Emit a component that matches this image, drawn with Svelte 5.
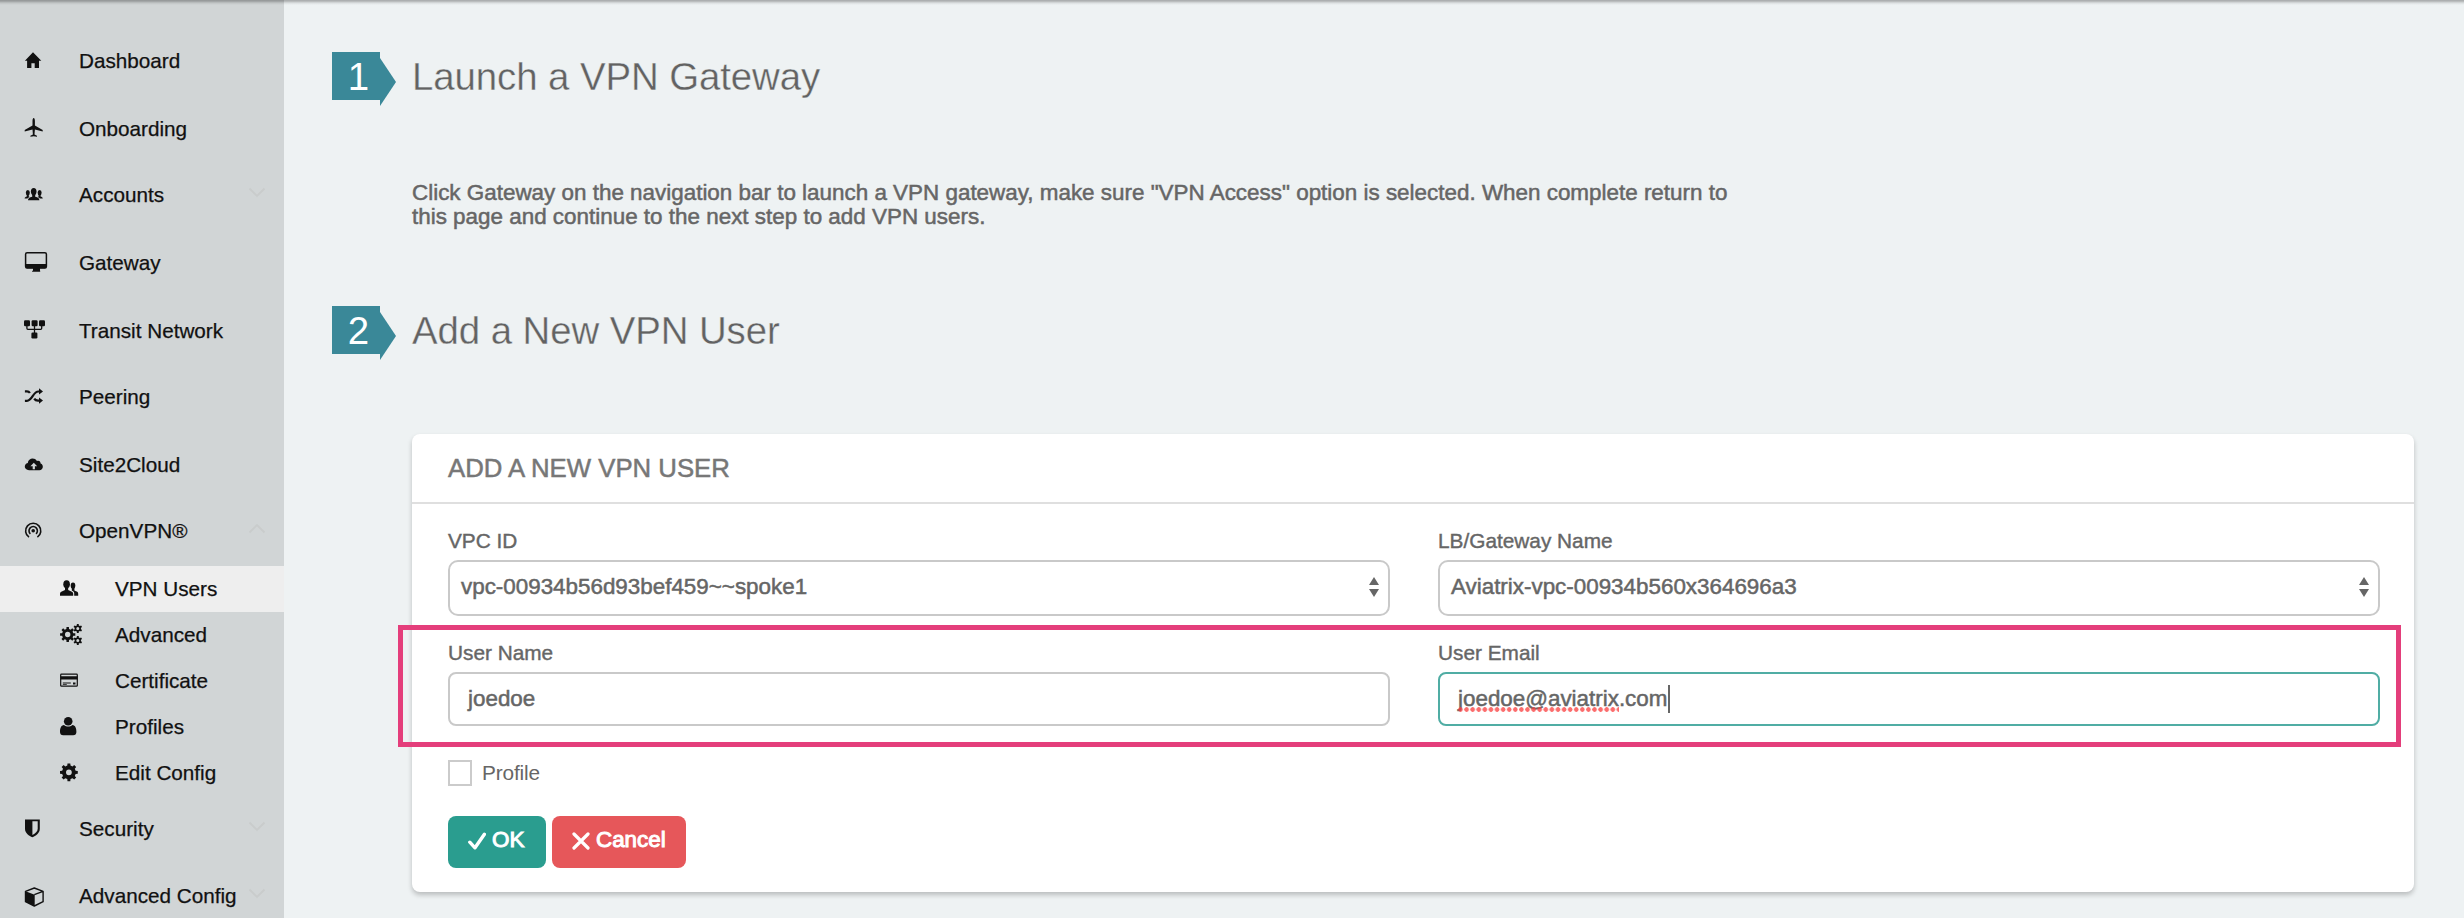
<script>
  function gear(cx, cy, outer, root, teeth, hole) {
    const step = (Math.PI * 2) / teeth;
    const at = (r, a) => `${(cx + r * Math.sin(a)).toFixed(2)} ${(cy - r * Math.cos(a)).toFixed(2)}`;
    let d = '';
    for (let i = 0; i < teeth; i++) {
      const a = i * step;
      d += `${i ? 'L' : 'M'}${at(root, a - step * 0.3)}L${at(outer, a - step * 0.2)}L${at(outer, a + step * 0.2)}L${at(root, a + step * 0.3)}`;
    }
    return `${d}ZM${cx - hole} ${cy}a${hole} ${hole} 0 1 0 ${hole * 2} 0a${hole} ${hole} 0 1 0 ${-hole * 2} 0Z`;
  }

  const items = [
    { label: 'Dashboard', icon: 'home', h: 68 },
    { label: 'Onboarding', icon: 'plane', h: 68 },
    { label: 'Accounts', icon: 'group', h: 64, chevron: 'down' },
    { label: 'Gateway', icon: 'desktop', h: 72 },
    { label: 'Transit Network', icon: 'transit', h: 64 },
    { label: 'Peering', icon: 'random', h: 68 },
    { label: 'Site2Cloud', icon: 'cloud', h: 68 },
    { label: 'OpenVPN®', icon: 'podcast', h: 64, chevron: 'up', open: true },
    { label: 'VPN Users', icon: 'users', h: 46, sub: true, active: true },
    { label: 'Advanced', icon: 'gears', h: 46, sub: true },
    { label: 'Certificate', icon: 'card', h: 46, sub: true },
    { label: 'Profiles', icon: 'user', h: 46, sub: true },
    { label: 'Edit Config', icon: 'gear', h: 46, sub: true },
    { label: 'Security', icon: 'shield', h: 66, chevron: 'down' },
    { label: 'Advanced Config', icon: 'cube', h: 68, chevron: 'down' }
  ];
</script>

<div class="page">
  <nav class="sidebar">
    {#each items as item}
      <a class="item" class:sub={item.sub} class:active={item.active} class:open={item.open} style:height="{item.h}px">
        <svg class="icon" width="26" height="24" viewBox="0 0 26 24">
          {#if item.icon === 'home'}
            <path d="M9 3.3L.9 11.7h2.2V19h4.3v-4.800h3.300V19H15v-7.300h2.300z" />
          {:else if item.icon === 'plane'}
            <path d="M9.7 1c.8 0 1.2 1.4 1.2 3v4.6l7.8 4.3v1.6l-7.8-2.1-.4 5 2.5 1.3v1.1l-3.3-.5-3.3.5v-1.1l2.5-1.3-.4-5-7.8 2.1v-1.6l7.8-4.3V4c0-1.6.4-3 1.2-3z" />
          {:else if item.icon === 'group'}
            <ellipse cx="9.7" cy="8.6" rx="2.8" ry="3.6" />
            <path d="M4 17.2c0-2.2 1.4-2.7 4.2-3.5v-3h3v3c2.800.8 4.200 1.300 4.200 3.500z" />
            <ellipse cx="3.8" cy="9.800" rx="2" ry="2.700" />
            <ellipse cx="15.600" cy="9.800" rx="2" ry="2.700" />
            <path d="M.6 15.600c.1-1.300 1-1.800 2.200-2.200v-2h2v2l.9.5c-1.300.5-1.900 1-2.200 1.700zM18.800 15.600c-.1-1.300-1-1.800-2.200-2.200v-2h-2v2l-.9.5c1.300.5 1.900 1 2.200 1.700z" />
          {:else if item.icon === 'desktop'}
            <rect x="1.6" y="1.700" width="20.800" height="15.200" rx="1.500" fill="none" stroke="#111" stroke-width="1.500" />
            <path d="M1.500 13h21v3l-1.200 1.200H16v2.600h.2v1H8.100v-1H9v-2.600H2.500L1.500 16z" />
          {:else if item.icon === 'transit'}
            <rect x="0" y="1.300" width="6" height="6" rx="1.200" />
            <rect x="7.600" y="1.300" width="6" height="6" rx="1.200" />
            <rect x="15" y="1.300" width="6" height="6" rx="1.200" />
            <rect x="7.400" y="13.500" width="6" height="6" rx="1.200" />
            <path d="M2.900 6v3.300q0 1 1 1h12.800q1 0 1-1V6M10.500 6v8" fill="none" stroke="#111" stroke-width="1.300" />
          {:else if item.icon === 'random'}
            <path d="M.9 6.300h2q2 0 3 1.700M.9 15.800h2c5.500 0 6-9.300 11.500-9.300h1M10.200 13.600q1.200 2 3.800 2h1.400" fill="none" stroke="#111" stroke-width="2.200" />
            <path d="M15 3.300l4 3.100-4 3.200zM15 12.500l4 3.100-4 3.200z" />
          {:else if item.icon === 'cloud'}
            <path fill-rule="evenodd" d="M5 17.200c-5.200 0-5.500-6.200-1.200-7.100C4.200 5 10.600 4 13 8c2-.8 3.700.5 3.600 2.500 3.300 1 3 6.700-1.200 6.700zM9.800 9.800L6.400 13.300h2.300v3h2.200v-3h2.300z" />
          {:else if item.icon === 'podcast'}
            <path d="M5 18.200A7.600 7.600 0 1 1 13.400 18.200M6.400 14.900A4.200 4.200 0 1 1 12 14.900" fill="none" stroke="#111" stroke-width="1.600" />
            <circle cx="9.200" cy="11.800" r="1.800" />
          {:else if item.icon === 'users'}
            <ellipse cx="6.600" cy="7.200" rx="3.300" ry="4" />
            <path d="M0 18.700v-2c0-1.800 1.800-2.200 5-3.600v-3h3.200v3c3.200 1.400 5 1.800 5 3.600v2z" />
            <ellipse cx="13" cy="8.600" rx="2.300" ry="3.200" />
            <path d="M14.200 18.700v-2.300c0-1.300-.6-2-2.400-2.900v-3h2.600v3c2.500 1 3.800 1.500 3.800 3.200v2z" />
          {:else if item.icon === 'gears'}
            <path fill-rule="evenodd" d={gear(7.700, 11.500, 7.700, 5.700, 8, 2.700)} />
            <path fill-rule="evenodd" d={gear(17.800, 5.500, 4.500, 3.200, 6, 1.500)} />
            <path fill-rule="evenodd" d={gear(17.800, 17.500, 4.500, 3.200, 6, 1.500)} />
          {:else if item.icon === 'card'}
            <rect x=".7" y="5.200" width="16.600" height="12" rx=".8" fill="none" stroke="#111" stroke-width="1.200" />
            <path d="M.5 7.300h17v3.200H.5zM2.800 13.500h8v.9h-8zM2.800 15.300h4v.6h-4zM13 13.500h2.500v2H13z" />
          {:else if item.icon === 'user'}
            <circle cx="8.200" cy="6.200" r="4.300" />
            <path d="M4 10c2.500 2.100 5.900 2.100 8.400 0 3 .4 4 3 4 7 0 2-1.200 3.300-3.200 3.300H3.200C1.200 20.300 0 19 0 17c0-4 1-6.600 4-7z" />
          {:else if item.icon === 'gear'}
            <path fill-rule="evenodd" d={gear(8.900, 11.300, 9, 6.900, 8, 2.900)} />
          {:else if item.icon === 'shield'}
            <path fill-rule="evenodd" d="M1 2.400h14.800v9.300c0 4.600-4.200 7.200-7.400 8.600C5.200 18.900 1 16.300 1 11.700zM8.400 4.300v13.700c3-1.600 5.300-3.500 5.300-6.300V4.300z" />
          {:else if item.icon === 'cube'}
            <path d="M1.500 7.300L10.300 4l8.800 3.300v10.400l-8.800 4.300-8.800-4.300zM10.300 10.700l8.800-3.400" fill="none" stroke="#111" stroke-width="1.400" stroke-linejoin="round" />
            <path d="M1.500 7.300l9.200 3.400V22l-9.200-4.300z" />
          {/if}
        </svg>
        <span class="text">{item.label}</span>
        {#if item.chevron}
          <svg class="chevron" width="18" height="12" viewBox="0 0 18 12">
            <path d={item.chevron === 'down' ? 'M1.500 1.500L9 9l7.500-7.500' : 'M1.500 9.500L9 2l7.500 7.500'} fill="none" stroke="#c9cccc" stroke-width="1.800" />
          </svg>
        {/if}
      </a>
    {/each}
  </nav>

  <main>
    <section class="step">
      <div class="badge">1</div>
      <h2>Launch a VPN Gateway</h2>
      <p>Click Gateway on the navigation bar to launch a VPN gateway, make sure "VPN Access" option is selected. When complete return to this page and continue to the next step to add VPN users.</p>
    </section>

    <section class="step second">
      <div class="badge">2</div>
      <h2>Add a New VPN User</h2>
      <div class="panel">
        <header>ADD A NEW VPN USER</header>
        <div class="form">
          <div class="fields">
            {#each [['VPC ID', 'vpc-00934b56d93bef459~~spoke1'], ['LB/Gateway Name', 'Aviatrix-vpc-00934b560x364696a3']] as [label, value]}
              <div class="field">
                <div class="label">{label}</div>
                <div class="select">
                  <span>{value}</span>
                  <svg width="10" height="20" viewBox="0 0 10 20"><path d="M0 8L5 0l5 8zM0 12h10l-5 8z" fill="#666" /></svg>
                </div>
              </div>
            {/each}
            <div class="field">
              <div class="label">User Name</div>
              <div class="input">joedoe</div>
            </div>
            <div class="field">
              <div class="label">User Email</div>
              <div class="input focus"><span class="spell">joedoe@aviatrix</span>.com<i class="caret"></i></div>
            </div>
            <div class="highlight"></div>
          </div>
          <div class="check"><span class="box"></span><span class="name">Profile</span></div>
          <div class="buttons">
            <button class="ok">
              <svg width="18" height="18" viewBox="0 0 18 18"><path d="M1.800 10.200l5.200 5.600L16.400 2.300" fill="none" stroke="#fff" stroke-width="3.400" stroke-linecap="round" stroke-linejoin="round" /></svg>OK
            </button>
            <button class="cancel">
              <svg width="18" height="18" viewBox="0 0 18 18"><path d="M2 2l14 14M16 2L2 16" fill="none" stroke="#fff" stroke-width="3.200" stroke-linecap="round" /></svg>Cancel
            </button>
          </div>
        </div>
      </div>
    </section>
  </main>
  <div class="topshade"></div>
</div>

<style>
  :global(body) { margin: 0; overflow: hidden; }
  .page {
    position: relative;
    display: flex;
    width: 2464px;
    height: 918px;
    overflow: hidden;
    background: #eef2f3;
    color: #666;
    font-family: "Liberation Sans", Arial, sans-serif;
  }
  .topshade {
    position: absolute;
    inset: 0 0 auto 0;
    height: 5px;
    background: linear-gradient(rgba(0, 0, 0, .3), rgba(0, 0, 0, .24) 25%, rgba(0, 0, 0, .08) 60%, transparent);
  }
  .sidebar {
    flex: none;
    width: 284px;
    box-sizing: border-box;
    padding-top: 27px;
    background: #d1d5d6;
    color: #111;
    font-size: 20.700px;
  }
  .item { display: flex; align-items: center; padding: 0 18px 0 24px; }
  .item.sub { padding-left: 60px; }
  .item.open { margin-bottom: 3px; }
  .item.active { background: #eee; }
  .icon { flex: none; margin-right: 29px; overflow: visible; fill: #111; }
  .text { white-space: nowrap; -webkit-text-stroke: .25px #111; }
  .chevron { flex: none; margin: -4px 0 0 auto; }
  main { flex: 1; padding: 52px 50px 0 48px; }
  .step { display: grid; grid-template-columns: 80px 1fr; }
  .second { margin-top: 78px; }
  .badge {
    position: relative;
    width: 48px;
    height: 48px;
    box-sizing: border-box;
    padding-left: 5px;
    background: #3a8898;
    color: #fff;
    font-size: 38.400px;
    line-height: 49px;
    text-align: center;
  }
  .badge::after {
    content: '';
    position: absolute;
    left: 48px;
    top: 6px;
    border: solid transparent;
    border-width: 24px 0 24px 16px;
    border-left-color: #3a8898;
  }
  h2 {
    margin: 0;
    height: 48px;
    font-size: 38.400px;
    line-height: 49px;
    letter-spacing: -.08px;
    font-weight: 400;
    color: #626262;
    -webkit-text-stroke: .35px #eef2f3;
  }
  p {
    grid-column: 2;
    width: 1330px;
    margin: 80px 0 0;
    padding-top: 1px;
    height: 47px;
    font-size: 22.430px;
    line-height: 24px;
    -webkit-text-stroke: .5px #666;
  }
  .panel {
    grid-column: 2;
    height: 458px;
    margin-top: 80px;
    border-radius: 8px;
    background: #fff;
    box-shadow: 0 3px 5px rgba(0, 0, 0, .22);
  }
  header {
    height: 68px;
    padding-left: 36px;
    border-bottom: 2px solid #dfdfdf;
    color: #777;
    font-size: 25.750px;
    line-height: 69px;
    -webkit-text-stroke: .5px #777;
  }
  .form { padding: 24px 34px 24px 36px; }
  .fields { position: relative; display: grid; grid-template-columns: 942px 942px; gap: 24px 48px; }
  .label { height: 26px; margin-bottom: 6px; font-size: 20.800px; line-height: 25px; -webkit-text-stroke: .4px #666; }
  .select, .input {
    display: flex;
    align-items: center;
    box-sizing: border-box;
    border: 2px solid #c9c9c9;
    border-radius: 10px;
    font-size: 22.400px;
    -webkit-text-stroke: .5px #666;
  }
  .select { justify-content: space-between; height: 56px; padding: 0 9px 3px 11px; }
  .input { height: 54px; padding: 0 18px 1px; border-radius: 8px; }
  .focus { border-color: #50ada4; }
  .spell { position: relative; }
  .spell::after {
    content: '';
    position: absolute;
    left: 0;
    right: 0;
    bottom: 0;
    height: 5px;
    background: radial-gradient(circle at 2.500px 2.500px, rgba(250, 60, 60, .75) 2px, transparent 2.600px) 0 0 / 6.100px 5px repeat-x;
  }
  .caret { width: 2px; height: 28px; margin-left: 1px; background: #666; }
  .highlight { position: absolute; left: -50px; top: 97px; width: 1993px; height: 112px; border: 5px solid #e43e7b; }
  .check { display: flex; align-items: center; height: 26px; margin-top: 34px; font-size: 20.800px; }
  .box { width: 20px; height: 22px; margin-right: 10px; border: 2px solid #cbcbcb; }
  .name { letter-spacing: -.15px; }
  .buttons { display: flex; gap: 6px; margin-top: 30px; }
  button {
    display: flex;
    align-items: center;
    height: 52px;
    padding: 0 0 4px 20px;
    border: 0;
    border-radius: 8px;
    color: #fff;
    font: 22.400px "Liberation Sans", Arial, sans-serif;
    -webkit-text-stroke: 1px #fff;
  }
  button svg { margin: 1px 6px 0 0; }
  .ok { width: 98px; background: #2a9d8f; }
  .cancel { width: 134px; background: #e6575a; }
</style>
